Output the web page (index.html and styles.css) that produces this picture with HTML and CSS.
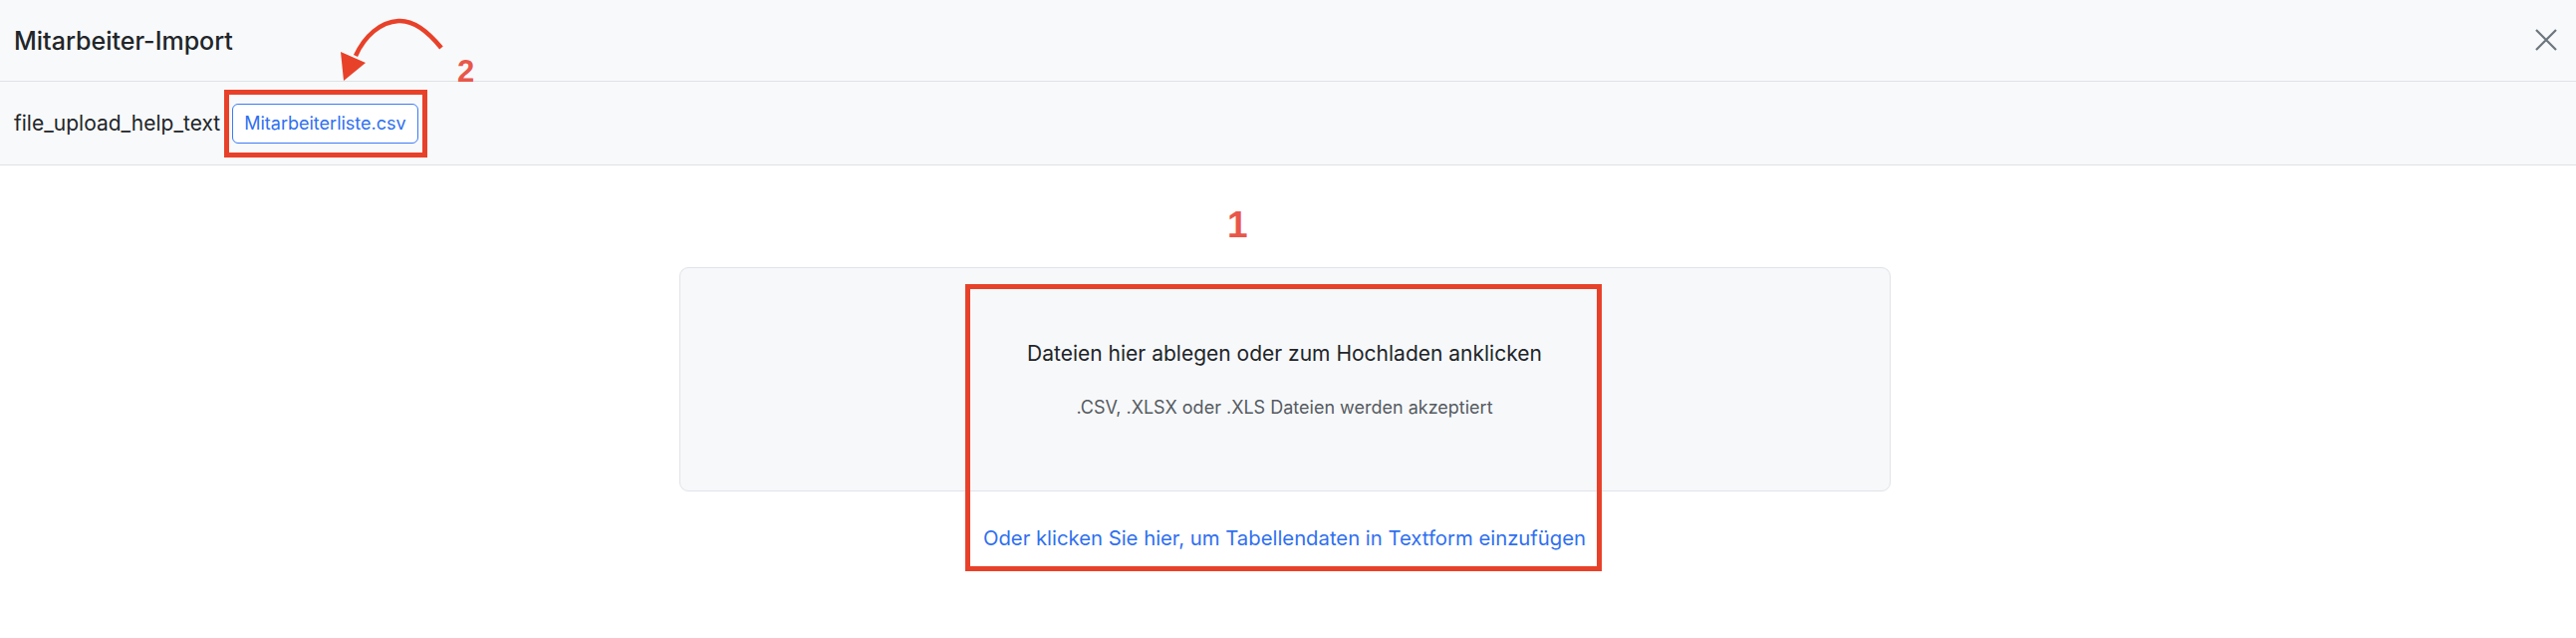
FILE: index.html
```html
<!DOCTYPE html>
<html lang="de">
<head>
    <meta charset="UTF-8">
    <meta name="viewport" content="width=device-width, initial-scale=1.0">
    <title>Mitarbeiter-Import</title>
    <link rel="stylesheet" href="styles.css">
</head>
<body>
    <div class="page">
        <header class="modal-header">
            <h1>Mitarbeiter-Import</h1>
            <button class="close-btn" aria-label="Schließen">
                <svg width="22" height="22" viewBox="0 0 22 22">
                    <path d="M1 1 L21 21 M21 1 L1 21" stroke="#6c757d" stroke-width="2.2" fill="none"/>
                </svg>
            </button>
        </header>

        <div class="toolbar">
            <span class="help-text">file_upload_help_text</span>
            <button class="template-btn">Mitarbeiterliste.csv</button>
        </div>

        <main class="modal-body">
            <div class="dropzone">
                <p class="drop-title">Dateien hier ablegen oder zum Hochladen anklicken</p>
                <p class="drop-hint">.CSV, .XLSX oder .XLS Dateien werden akzeptiert</p>
            </div>
            <a class="paste-link" href="#">Oder klicken Sie hier, um Tabellendaten in Textform einzufügen</a>
        </main>

        <!-- Markierungen aus dem Screenshot -->
        <div class="mark mark-box-2"></div>
        <span class="mark-num mark-num-2">2</span>
        <svg class="mark-arrow" width="140" height="90" viewBox="330 0 140 90">
            <path d="M443 48 C430 32 415 20 400 21 C382 22 366 36 357 56" stroke="#e8412a" stroke-width="4.5" fill="none"/>
            <polygon points="342,52 367,63 345,81" fill="#e8412a"/>
        </svg>
        <div class="mark mark-box-1"></div>
        <span class="mark-num mark-num-1">1</span>
    </div>
</body>
</html>
```

FILE: styles.css
```css
* {
    margin: 0;
    padding: 0;
    box-sizing: border-box;
}

body {
    font-family: Inter, 'Noto Sans', Arial, sans-serif;
    color: #212529;
    background-color: #ffffff;
}

.page {
    position: relative;
    width: 2586px;
    height: 640px;
}

.modal-header {
    display: flex;
    align-items: center;
    justify-content: space-between;
    height: 82px;
    padding: 0 14px;
    background-color: #f8f9fa;
    border-bottom: 1px solid #dee2e6;
}

.modal-header h1 {
    font-size: 25px;
    font-weight: 500;
}

.close-btn {
    border: none;
    background: none;
    width: 22px;
    height: 22px;
    margin-right: 5px;
    margin-top: -1px;
}

.toolbar {
    display: flex;
    align-items: center;
    gap: 12px;
    height: 84px;
    padding: 0 14px;
    background-color: #f8f9fa;
    border-bottom: 1px solid #dee2e6;
}

.help-text {
    font-size: 21px;
}

.template-btn {
    height: 40px;
    padding: 0 11px;
    font-family: inherit;
    font-size: 18px;
    color: #2f6ff0;
    background-color: #ffffff;
    border: 1.5px solid #3d7bf7;
    border-radius: 6px;
}

.modal-body {
    display: flex;
    flex-direction: column;
    align-items: center;
    padding-top: 102px;
    padding-right: 7px;
}

.dropzone {
    width: 1216px;
    height: 225px;
    padding-top: 71px;
    background-color: #f7f8fa;
    border: 1.5px solid #e0e3e8;
    border-radius: 9px;
    text-align: center;
}

.drop-title {
    font-size: 21px;
    line-height: 30px;
}

.drop-hint {
    margin-top: 26px;
    font-size: 18px;
    line-height: 26px;
    color: #555b61;
}

.paste-link {
    margin-top: 32px;
    font-size: 20.3px;
    line-height: 30px;
    color: #2f6ff0;
    text-decoration: none;
}

/* Annotationen */
.mark {
    position: absolute;
    border: 5px solid #e8412a;
}

.mark-box-2 {
    left: 225px;
    top: 90px;
    width: 204px;
    height: 68px;
}

.mark-box-1 {
    left: 969px;
    top: 285px;
    width: 639px;
    height: 288px;
}

.mark-num {
    position: absolute;
    font-family: 'Liberation Sans', Arial, sans-serif;
    font-weight: bold;
    color: #e8574a;
}

.mark-num-2 {
    left: 459px;
    top: 54px;
    font-size: 31px;
}

.mark-num-1 {
    left: 1232px;
    top: 205px;
    font-size: 37px;
}

.mark-arrow {
    position: absolute;
    left: 330px;
    top: 0;
}
```
